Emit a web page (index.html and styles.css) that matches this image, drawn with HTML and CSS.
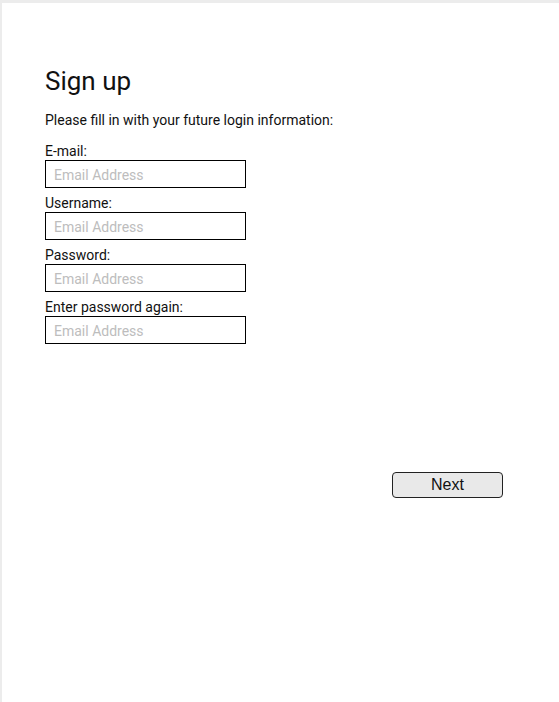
FILE: index.html
```html
<!DOCTYPE html>
<html>
<head>
<meta charset="utf-8">
<link rel="stylesheet" href="styles.css">
</head>
<body>
<div class="page">
  <div class="content">
    <h1 class="title">Sign up</h1>
    <p class="intro">Please fill in with your future login information:</p>
    <div class="fields">
      <label class="field">
        <span class="label">E-mail:</span>
        <input class="input" type="text" placeholder="Email Address">
      </label>
      <label class="field">
        <span class="label">Username:</span>
        <input class="input" type="text" placeholder="Email Address">
      </label>
      <label class="field">
        <span class="label">Password:</span>
        <input class="input" type="text" placeholder="Email Address">
      </label>
      <label class="field">
        <span class="label">Enter password again:</span>
        <input class="input" type="text" placeholder="Email Address">
      </label>
    </div>
    <div class="actions">
      <button class="next" type="button">Next</button>
    </div>
  </div>
</div>
</body>
</html>
```
FILE: styles.css
```css
html, body {
  margin: 0;
  padding: 0;
  height: 100%;
}
body {
  background: #ececec;
  font-family: Roboto, "Liberation Sans", sans-serif;
  color: #111;
}
.page {
  margin: 3px 0 0 2px;
  background: #fff;
  min-height: calc(100% - 3px);
}
.content {
  padding: 62px 56px 0 43px;
}
.title {
  margin: 0;
  font-size: 26px;
  font-weight: 400;
  line-height: 32px;
}
.intro {
  margin: 14px 0 13px;
  font-size: 14px;
  line-height: 18px;
}
.fields {
  display: flex;
  flex-direction: column;
  gap: 6px;
}
.field {
  display: flex;
  flex-direction: column;
  font-size: 14px;
}
.label {
  line-height: 18px;
}
.input {
  box-sizing: border-box;
  width: 201px;
  height: 28px;
  margin: 0;
  border: 1px solid #000;
  border-radius: 0;
  padding: 1px 8px 0;
  font-family: Roboto, sans-serif;
  font-size: 14px;
  outline: none;
}
.input::placeholder {
  color: #bdbdbd;
}
.actions {
  display: flex;
  justify-content: flex-end;
  margin-top: 128px;
}
.next {
  box-sizing: border-box;
  width: 111px;
  height: 26px;
  border: 1px solid #222;
  border-radius: 4px;
  background: #e9e9e9;
  font-family: "Liberation Sans", Arial, sans-serif;
  font-size: 16px;
  color: #111;
  padding: 0;
}
```
